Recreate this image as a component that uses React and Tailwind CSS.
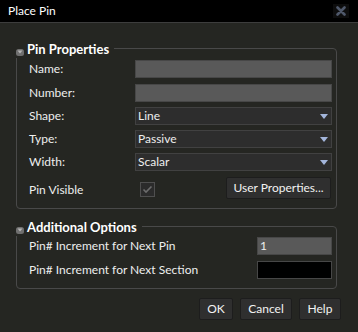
import React from "react";

const Caret = () => (
  <svg width="8" height="5" viewBox="0 0 8 5" className="shrink-0">
    <polygon points="0,0 8,0 4,5" fill="#a3b5db" />
  </svg>
);

const Collapse = () => (
  <svg width="8" height="7" viewBox="0 0 8 7" className="shrink-0 mt-[9px]">
    <rect x="0" y="0" width="8" height="7" rx="2.5" fill="#6f6f6f" />
    <polygon points="1.5,1.5 6.5,1.5 4,4.5" fill="#b5b5b5" />
  </svg>
);

const GroupHeader = ({ title }) => (
  <div className="absolute left-[-1px] top-[-9px] h-[18px] flex items-start whitespace-nowrap bg-[#252622] pr-[5px]">
    <Collapse />
    <span className="ml-[3px] font-bold text-[13px] leading-[18px] text-white">{title}</span>
  </div>
);

const TextField = ({ value, dark }) => (
  <div
    className={`h-[18px] border border-[#474747] px-[2px] flex items-center leading-none ${
      dark ? "bg-black" : "bg-[#595959]"
    }`}
  >
    {value}
  </div>
);

const Select = ({ value }) => (
  <div className="w-[197px] h-[18px] bg-[#2d2d2d] border border-[#414141] flex items-center justify-between pl-[2px] pr-[3px]">
    <span className="leading-none">{value}</span>
    <Caret />
  </div>
);

const Row = ({ label, children, className }) => (
  <div className={`flex items-center ${className}`}>
    <span className="w-[106px] leading-none">{label}</span>
    {children}
  </div>
);

const Button = ({ children, width }) => (
  <button className={`h-[22px] bg-[#2f2f2f] border border-[#1d1d1d] rounded-[2px] text-[12px] text-[#f2f2f2] ${width}`}>
    {children}
  </button>
);

export default function App() {
  return (
    <div className="w-[358px] h-[332px] bg-[#252622] text-[12px] text-[#eeeeee] font-['Lato',sans-serif] flex flex-col overflow-hidden">
      {/* title bar */}
      <div className="h-[23px] bg-black border-b border-[#3d3d3d] flex items-center justify-between pl-[8px] pr-[9px]">
        <span className="text-white text-[12px]">Place Pin</span>
        <div className="w-[16px] h-[14px] bg-[#0d0d0d] flex items-center justify-center">
          <svg width="10" height="10" viewBox="0 0 10 10">
            <path d="M1.5 1.5 L8.5 8.5 M8.5 1.5 L1.5 8.5" stroke="#4f586a" strokeWidth="2.6" strokeLinecap="round" />
          </svg>
        </div>
      </div>

      {/* Pin Properties */}
      <div className="relative ml-4 mt-[25px] w-[321px] border border-[#494949] rounded-[4px] pl-[12px] pr-[4px] pt-[11px] pb-[9px]">
        <GroupHeader title="Pin Properties" />
        <Row label="Name:" className="h-[18px]">
          <div className="w-[197px]">
            <TextField value="" />
          </div>
        </Row>
        <Row label="Number:" className="h-[18px] mt-[6px]">
          <div className="w-[197px]">
            <TextField value="" />
          </div>
        </Row>
        <Row label="Shape:" className="h-[18px] mt-[5px]">
          <Select value="Line" />
        </Row>
        <Row label="Type:" className="h-[18px] mt-[5px]">
          <Select value="Passive" />
        </Row>
        <Row label="Width:" className="h-[18px] mt-[5px]">
          <Select value="Scalar" />
        </Row>
        <div className="flex items-start h-[22px] mt-[6px]">
          <span className="w-[106px] leading-none mt-[7px]">Pin Visible</span>
          <div className="ml-[5px] mt-[5px] w-[15px] h-[15px] border border-[#4f4f4f] bg-[#2b2b2b] flex items-center justify-center">
            <svg width="11" height="9" viewBox="0 0 11 9">
              <path d="M1.5 4.5 L4 7 L9.5 1.5" stroke="#6c6c6c" strokeWidth="1.6" fill="none" />
            </svg>
          </div>
          <button className="ml-auto mr-[1px] w-[105px] h-[22px] bg-[#2f2f2f] border border-[#1d1d1d] rounded-[2px] text-[12px] text-[#f2f2f2]">
            User Properties...
          </button>
        </div>
      </div>

      {/* Additional Options */}
      <div className="relative ml-4 mt-[17px] w-[321px] border border-[#494949] rounded-[4px] pl-[12px] pr-[4px] pt-[10px] pb-[9px]">
        <GroupHeader title="Additional Options" />
        <div className="flex items-center h-[18px]">
          <span className="leading-none">Pin# Increment for Next Pin</span>
          <div className="ml-auto w-[75px]">
            <TextField value="1" />
          </div>
        </div>
        <div className="flex items-center h-[18px] mt-[6px]">
          <span className="leading-none">Pin# Increment for Next Section</span>
          <div className="ml-auto w-[75px]">
            <TextField value="" dark />
          </div>
        </div>
      </div>

      {/* buttons */}
      <div className="flex justify-end gap-[7px] mt-[9px] pr-[17px]">
        <Button width="w-[34px]">OK</Button>
        <Button width="w-[52px]">Cancel</Button>
        <Button width="w-[42px]">Help</Button>
      </div>
    </div>
  );
}
